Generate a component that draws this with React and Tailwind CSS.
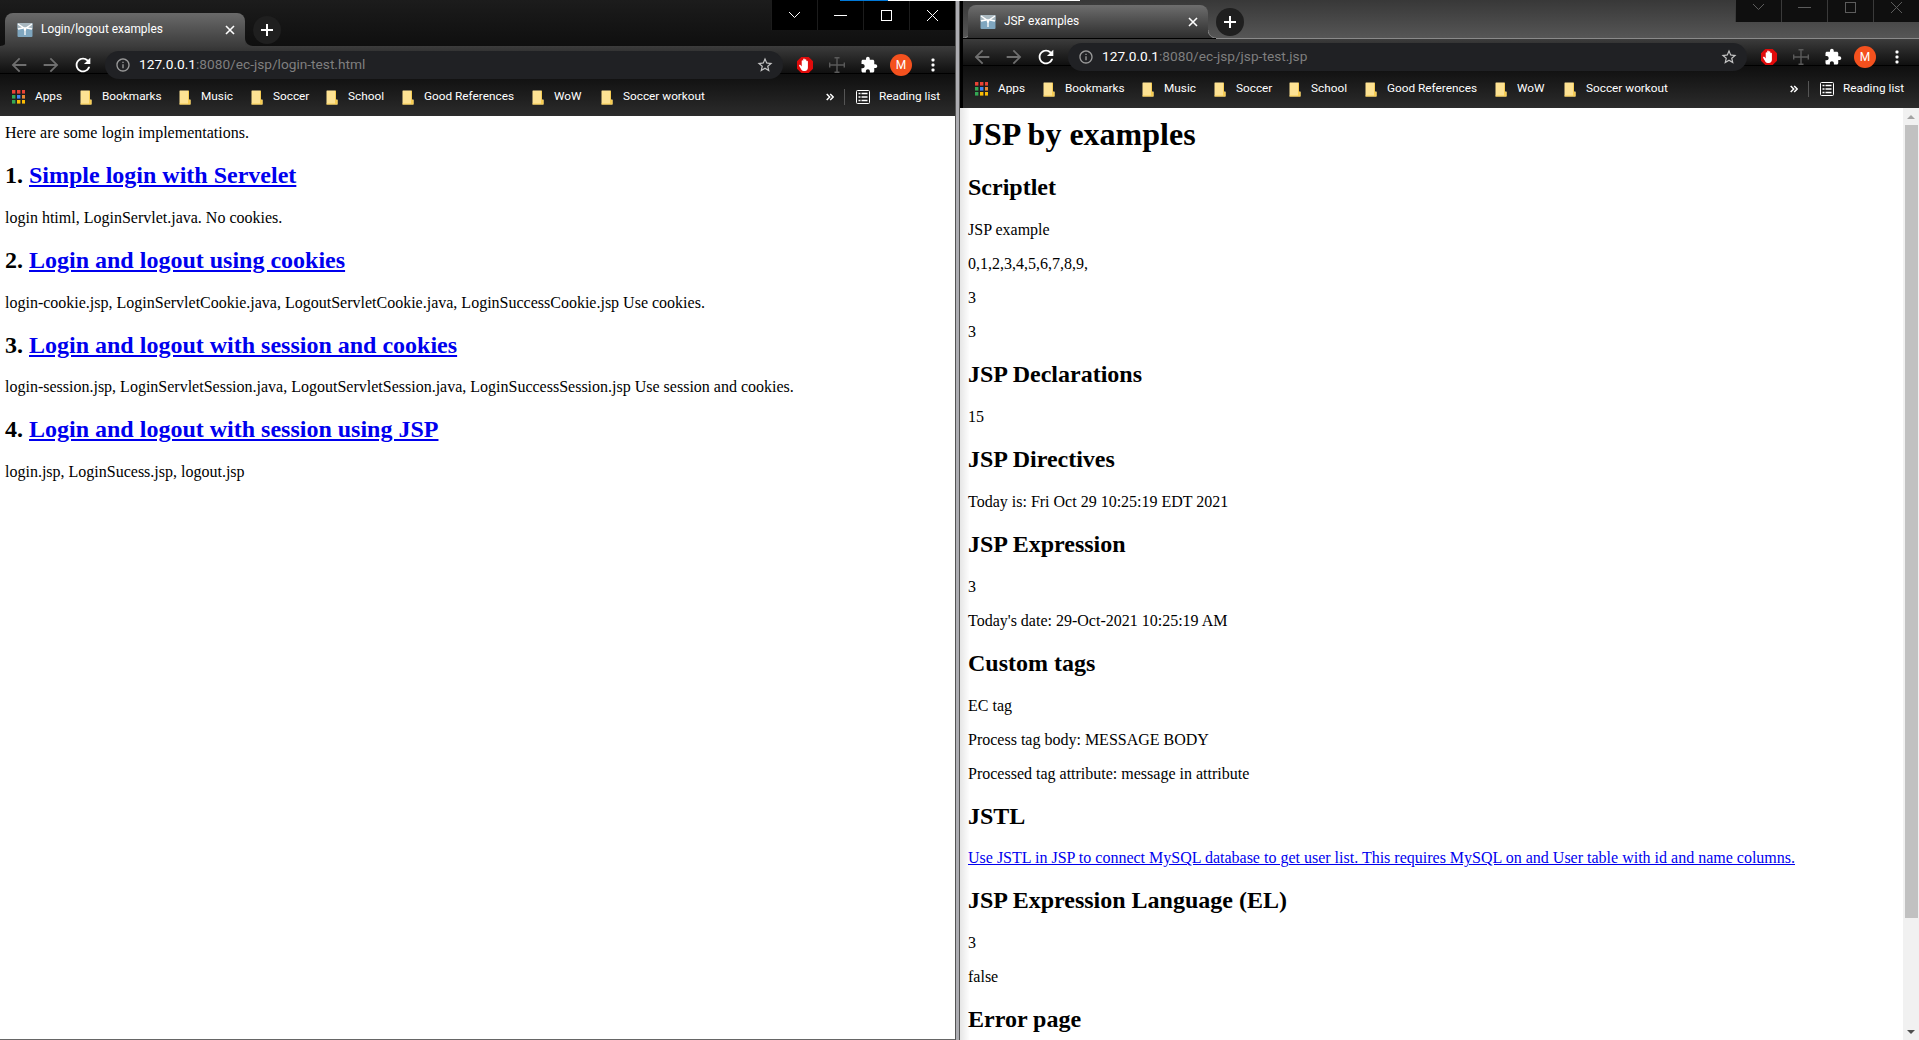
import React from "react";

const UI = { fontFamily: 'Roboto, "Noto Sans", sans-serif' };

const P = {
  back: "M20 11H7.83l5.59-5.59L12 4l-8 8 8 8 1.41-1.41L7.83 13H20v-2z",
  fwd: "M12 4l-1.41 1.41L16.17 11H4v2h12.17l-5.58 5.59L12 20l8-8z",
  reload: "M17.65 6.35A7.958 7.958 0 0 0 12 4c-4.42 0-7.99 3.58-7.99 8s3.57 8 7.99 8c3.73 0 6.84-2.55 7.73-6h-2.08A5.99 5.99 0 0 1 12 18c-3.31 0-6-2.69-6-6s2.69-6 6-6c1.66 0 3.14.69 4.22 1.78L13 11h7V4l-2.35 2.35z",
  info: "M11 7h2v2h-2zm0 4h2v6h-2zm1-9C6.48 2 2 6.48 2 12s4.48 10 10 10 10-4.48 10-10S17.52 2 12 2zm0 18c-4.41 0-8-3.59-8-8s3.59-8 8-8 8 3.59 8 8-3.59 8-8 8z",
  star: "M22 9.24l-7.19-.62L12 2 9.19 8.63 2 9.24l5.46 4.73L5.82 21 12 17.27 18.18 21l-1.63-7.03L22 9.24zM12 15.4l-3.76 2.27 1-4.28-3.32-2.88 4.38-.38L12 6.1l1.71 4.04 4.38.38-3.32 2.88 1 4.28L12 15.4z",
  puzzle: "M20.5 11H19V7c0-1.1-.9-2-2-2h-4V3.5C13 2.12 11.88 1 10.5 1S8 2.12 8 3.5V5H4c-1.1 0-1.99.9-1.99 2v3.8H3.5c1.49 0 2.7 1.21 2.7 2.7s-1.21 2.7-2.7 2.7H2V20c0 1.1.9 2 2 2h3.8v-1.5c0-1.49 1.21-2.7 2.7-2.7 1.49 0 2.7 1.21 2.7 2.7V22H17c1.1 0 2-.9 2-2v-4h1.5c1.38 0 2.5-1.12 2.5-2.5S21.88 11 20.5 11z",
};

function Mat({ d, size = 24, color = "#fff" }) {
  return (
    <svg width={size} height={size} viewBox="0 0 24 24" fill={color}>
      <path d={d} />
    </svg>
  );
}

function Box({ children }) {
  return <div className="flex h-[28px] w-[32px] shrink-0 items-center justify-center">{children}</div>;
}

function Favicon() {
  return (
    <svg width="16" height="16" viewBox="0 0 16 16" className="shrink-0">
      <rect x="0.5" y="1" width="15" height="14" rx="1" fill="#7fa6bf" />
      <rect x="0.5" y="1" width="15" height="6" fill="#a9b8c0" />
      <path d="M1 2l6 4 2 0 6-4M1 7l5-1M15 7l-5-1M7 6l1 3 1-3M8 9v4" stroke="#fff" strokeWidth="1.3" fill="none" />
    </svg>
  );
}

function Folder() {
  return (
    <svg width="12" height="15" viewBox="0 0 12 15" className="shrink-0">
      <path d="M1 0.5h7.5c.6 0 1 .4 1 1V9.5h2V14a.5.5 0 0 1-.5.5H1a.5.5 0 0 1-.5-.5V1a.5.5 0 0 1 .5-.5z" fill="#fde293" />
      <path d="M9 0.5c.6 0 1 .4 1 1V10h1.5v4.5H1a.5.5 0 0 1-.5-.5v-.5H9z" fill="#f7cd55" />
    </svg>
  );
}

function AppsGrid() {
  const c = ["#ea4335", "#ea4335", "#ea4335", "#34a853", "#4285f4", "#ea8a35", "#34a853", "#fbbc04", "#fbbc04"];
  return (
    <svg width="13" height="14" viewBox="0 0 13 14" className="shrink-0">
      {c.map((f, i) => (
        <rect key={i} x={(i % 3) * 5} y={Math.floor(i / 3) * 5} width="3.4" height="3.6" fill={f} />
      ))}
    </svg>
  );
}

function Hand() {
  return (
    <svg width="18" height="18" viewBox="0 0 18 18">
      <path d="M5.3 1h7.4L17 5.3v7.4L12.7 17H5.3L1 12.7V5.3z" fill="#e00b0b" />
      <path d="M5.6 14l-2.4-4c-.5-.9.6-1.6 1.3-.9l1.2 1.3V5c0-1.1 1.5-1.1 1.5 0v3V3.4c0-1.1 1.6-1.1 1.6 0V8 4c0-1.1 1.6-1.1 1.6 0v4.4-3c0-1 1.5-1 1.5 0v6.4c0 2-1.2 3.2-3 3.2H7.8c-1 0-1.7-.3-2.2-1z" fill="#fff" />
    </svg>
  );
}

function Cross() {
  return (
    <svg width="16" height="16" viewBox="0 0 16 16" fill="none" stroke="#5a5a5a" strokeWidth="1.4">
      <path d="M8 0.5v15M0.5 8h15M5.5 0.7h5M5.5 15.3h5M0.7 5.5v5M15.3 5.5v5" />
    </svg>
  );
}

function ReadingIcon() {
  return (
    <svg width="14" height="14" viewBox="0 0 14 14" fill="none" stroke="#fff" className="shrink-0">
      <rect x="0.5" y="0.5" width="13" height="13" rx="1" strokeWidth="1" />
      <path d="M2.5 3.5h2M2.5 7h2M2.5 10.5h2M5.5 3.5h6M5.5 7h6M5.5 10.5h6" strokeWidth="1.6" />
    </svg>
  );
}

function Chevrons() {
  return (
    <svg width="8" height="8" viewBox="0 0 8 8" fill="none" stroke="#fff" strokeWidth="1.5" className="ml-auto shrink-0">
      <path d="M0.7 1l3 3-3 3M4.2 1l3 3-3 3" />
    </svg>
  );
}

function Controls({ dim }) {
  const stroke = dim ? "#5c5c5c" : "#ffffff";
  const glyphs = [
    <path d="M1 3l5.5 5.5L12 3" />,
    <path d="M0 6.5h13" />,
    <rect x="1.5" y="1.5" width="10" height="10" />,
    <path d="M1 1l11 11M12 1L1 12" />,
  ];
  return (
    <div className={`ml-auto flex self-start ${dim ? "h-[22px] bg-[#0f0f0f]" : "h-[30px] bg-black"}`}>
      {glyphs.map((g, i) => (
        <div
          key={i}
          className={`flex w-[46px] items-center justify-center ${dim ? "pb-2 border-l border-[#3a3a3a]" : "border-l border-[#1c1c1c]"}`}
        >
          <svg width="13" height="13" viewBox="0 0 13 13" fill="none" stroke={stroke} strokeWidth="1">
            {g}
          </svg>
        </div>
      ))}
    </div>
  );
}

function Flare({ side, color, line }) {
  const d = side === "l" ? "M0 8c4 0 8-3 8-8v8z" : "M8 8C4 8 0 5 0 0v8z";
  const s = side === "l" ? "M0 8c4 0 8-3 8-8" : "M8 8C4 8 0 5 0 0";
  return (
    <svg width="8" height="8" viewBox="0 0 8 8" className="shrink-0 self-end">
      <path d={d} fill={color} />
      {line && <path d={s} fill="none" stroke={line} />}
    </svg>
  );
}

const bookmarks = [
  ["Bookmarks", "w-[59px]"],
  ["Music", "w-[32px]"],
  ["Soccer", "w-[35px]"],
  ["School", "w-[36px]"],
  ["Good References", "w-[90px]"],
  ["WoW", "w-[29px]"],
  ["Soccer workout", "w-[82px]"],
];

function Chrome({ title, host, path, secondary }) {
  const stripH = secondary ? "h-[38px] bg-gradient-to-b from-[#383838] to-[#565656]" : "h-[46px] bg-gradient-to-b from-[#1c1c1c] to-[#0f0f0f]";
  const tabBottom = secondary ? "#2e2e2e" : "#3c3c3c";
  const tabGrad = secondary
    ? "bg-gradient-to-b from-[#6e6e6e] to-[#2e2e2e]"
    : "bg-gradient-to-b from-[#6a6a6a] to-[#3c3c3c]";
  return (
    <div style={UI}>
      <div className={`flex items-end ${stripH}`}>
        <Flare side="l" color={tabBottom} line={secondary ? "#8a8a8a" : undefined} />
        <div className={`-ml-[3px] flex h-[33px] w-[240px] shrink-0 items-center rounded-t-[8px] pl-[12px] pr-[10px] ${tabGrad}`}>
          <Favicon />
          <span className="ml-[8px] text-[11.9px] leading-none text-white">{title}</span>
          <svg width="10" height="10" viewBox="0 0 10 10" className="ml-auto" stroke="#fff" strokeWidth="1.6">
            <path d="M1 1l8 8M9 1L1 9" />
          </svg>
        </div>
        <Flare side="r" color={tabBottom} line={secondary ? "#8a8a8a" : undefined} />
        <div className="mb-[2px] flex h-[28px] w-[28px] items-center justify-center rounded-full bg-[#1f1f1f]">
          <svg width="14" height="14" viewBox="0 0 14 14" stroke="#fff" strokeWidth="2">
            <path d="M7 1v12M1 7h12" />
          </svg>
        </div>
        <Controls dim={secondary} />
      </div>
      {secondary && <div className="ml-[253px] h-px bg-[#8a8a8a]" />}
      <div className={`flex items-start pl-[3px] pr-[6px] bg-gradient-to-b from-[#3c3c3c] to-[#101010] border-b border-black ${secondary ? "h-[27px] pt-[4px]" : "h-[28px] pt-[5px]"}`}>
        <Box><Mat d={P.back} color="#6f6f6f" size={22} /></Box>
        <Box><Mat d={P.fwd} color="#6f6f6f" size={22} /></Box>
        <Box><Mat d={P.reload} size={22} /></Box>
        <div className="relative z-10 ml-[6px] mr-[6px] flex h-[28px] flex-1 items-center rounded-full bg-[#202124] pl-[10px] pr-[8px]">
          <Mat d={P.info} color="#9a9a9a" size={16} />
          <span className="ml-[8px] text-[13.7px] leading-none text-white">{host}<span className="text-[#7f7f7f]">{path}</span></span>
          <span className="ml-auto mr-[1px]"><Mat d={P.star} color="#c4c4c4" size={18} /></span>
        </div>
        <Box><Hand /></Box>
        <Box><Cross /></Box>
        <Box><Mat d={P.puzzle} size={18} /></Box>
        <Box>
          <div className="flex h-[22px] w-[22px] items-center justify-center rounded-full bg-[#f4511e] text-[12px] leading-none text-white">M</div>
        </Box>
        <Box>
          <svg width="4" height="14" viewBox="0 0 4 14" fill="#fff">
            <rect x="0.5" y="0.5" width="3" height="3" rx="1" />
            <rect x="0.5" y="5.5" width="3" height="3" rx="1" />
            <rect x="0.5" y="10.5" width="3" height="3" rx="1" />
          </svg>
        </Box>
      </div>
      <div className="flex h-[42px] items-center pl-[12px] pr-[15px] pt-[4px] text-[11.8px] leading-none text-white bg-gradient-to-b from-[#0f0f0f] to-[#2c2c2c]">
        <AppsGrid />
        <span className="ml-[10px] w-[27px] whitespace-nowrap">Apps</span>
        {bookmarks.map(([label, w]) => (
          <React.Fragment key={label}>
            <span className="ml-[18px]"><Folder /></span>
            <span className={`ml-[10px] whitespace-nowrap ${w}`}>{label}</span>
          </React.Fragment>
        ))}
        <Chevrons />
        <span className="ml-[10px] h-[16px] w-px bg-[#555]" />
        <span className="ml-[11px]"><ReadingIcon /></span>
        <span className="ml-[9px] w-[61px] whitespace-nowrap">Reading list</span>
      </div>
    </div>
  );
}

const H1 = ({ children }) => <h1 className="mt-0 mb-[21.44px] text-[32px] font-bold">{children}</h1>;
const H2 = ({ children }) => <h2 className="my-[19.92px] text-[24px] font-bold">{children}</h2>;
const Para = ({ children }) => <p className="my-4">{children}</p>;
const A = ({ children }) => <a href="#" className="text-[#0000ee] underline">{children}</a>;

function LeftPage() {
  return (
    <div className="flex-1 overflow-hidden bg-white pl-[5px] pt-2 leading-[normal] text-black text-[16px]" style={{ fontFamily: '"Liberation Serif", serif' }}>
      <p className="mt-0 mb-4">Here are some login implementations.</p>
      <H2>1. <A>Simple login with Servelet</A></H2>
      <Para>login htiml, LoginServlet.java. No cookies.</Para>
      <H2>2. <A>Login and logout using cookies</A></H2>
      <Para>login-cookie.jsp, LoginServletCookie.java, LogoutServletCookie.java, LoginSuccessCookie.jsp Use cookies.</Para>
      <H2>3. <A>Login and logout with session and cookies</A></H2>
      <Para>login-session.jsp, LoginServletSession.java, LogoutServletSession.java, LoginSuccessSession.jsp Use session and cookies.</Para>
      <H2>4. <A>Login and logout with session using JSP</A></H2>
      <Para>login.jsp, LoginSucess.jsp, logout.jsp</Para>
    </div>
  );
}

function RightPage() {
  return (
    <div className="flex min-h-0 flex-1 bg-white">
      <div
        className="min-w-0 flex-1 overflow-hidden pl-2 pt-2 leading-[normal] text-black text-[16px] bg-gradient-to-r from-[#e6e6e6] to-[#ffffff] bg-[length:10px_100%] bg-no-repeat"
        style={{ fontFamily: '"Liberation Serif", serif' }}
      >
        <H1>JSP by examples</H1>
        <H2>Scriptlet</H2>
        <Para>JSP example</Para>
        <Para>0,1,2,3,4,5,6,7,8,9,</Para>
        <Para>3</Para>
        <Para>3</Para>
        <H2>JSP Declarations</H2>
        <Para>15</Para>
        <H2>JSP Directives</H2>
        <Para>Today is: Fri Oct 29 10:25:19 EDT 2021</Para>
        <H2>JSP Expression</H2>
        <Para>3</Para>
        <Para>Today's date: 29-Oct-2021 10:25:19 AM</Para>
        <H2>Custom tags</H2>
        <Para>EC tag</Para>
        <Para>Process tag body: MESSAGE BODY</Para>
        <Para>Processed tag attribute: message in attribute</Para>
        <H2>JSTL</H2>
        <Para><A>Use JSTL in JSP to connect MySQL database to get user list. This requires MySQL on and User table with id and name columns.</A></Para>
        <H2>JSP Expression Language (EL)</H2>
        <Para>3</Para>
        <Para>false</Para>
        <H2>Error page</H2>
      </div>
      <div className="flex w-[16px] shrink-0 flex-col items-center bg-[#f1f1f1]">
        <div className="flex h-[17px] items-center">
          <div className="h-0 w-0 border-x-[4px] border-b-[4px] border-x-transparent border-b-[#a3a3a3]" />
        </div>
        <div className="h-[793px] w-[13px] bg-[#c1c1c1]" />
        <div className="mt-auto flex h-[17px] items-center">
          <div className="h-0 w-0 border-x-[4px] border-t-[4px] border-x-transparent border-t-[#505050]" />
        </div>
      </div>
    </div>
  );
}

export default function App() {
  return (
    <div className="relative flex h-[1040px] w-[1919px] overflow-hidden">
      <div className="flex w-[955px] shrink-0 flex-col border-b border-[#666]">
        <Chrome title="Login/logout examples" host="127.0.0.1" path=":8080/ec-jsp/login-test.html" />
        <LeftPage />
      </div>
      <div className="w-[4px] shrink-0 border-l border-[#555] bg-[#adadb2]" />
      <div className="w-px shrink-0 bg-[#555]" />
      <div className="flex min-w-0 flex-1 flex-col">
        <div className="bg-black pl-[3px]">
          <Chrome title="JSP examples" host="127.0.0.1" path=":8080/ec-jsp/jsp-test.jsp" secondary />
        </div>
        <RightPage />
      </div>
      <div className="absolute left-[840px] top-0 h-px w-[48px] bg-[#0078d7]" />
      <div className="absolute left-[888px] top-0 h-px w-[192px] bg-white" />
    </div>
  );
}
